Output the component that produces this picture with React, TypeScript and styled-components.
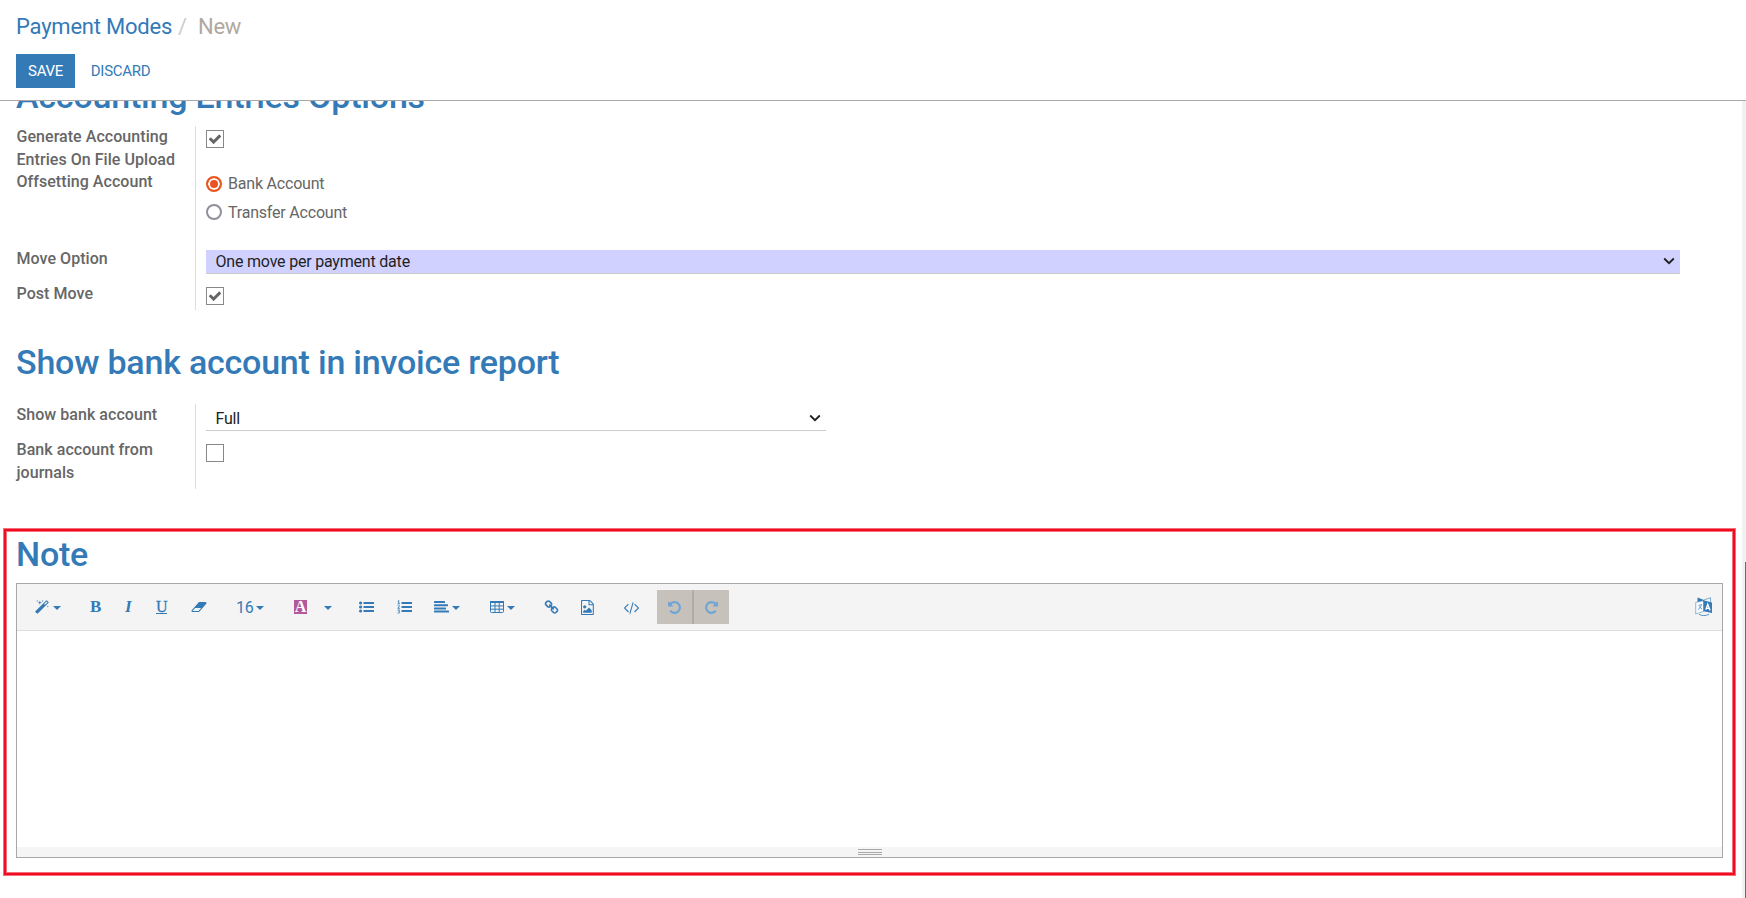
import React from "react";
import styled, { createGlobalStyle } from "styled-components";

const BLUE = "#337ab7";

const GlobalStyle = createGlobalStyle`
  * { box-sizing: border-box; }
  body { margin: 0; background: #fff; overflow: hidden; font-family: Roboto, "Noto Sans", sans-serif; }
`;

const Page = styled.div`
  width: 100%;
  height: 898px;
  display: flex;
  flex-direction: column;
  overflow: hidden;
  font-size: 16px;
  line-height: 23px;
  letter-spacing: -0.2px;
  color: #666;
`;
const ControlPanel = styled.header`
  flex: none;
  height: 101px;
  border-bottom: 1px solid #a8a8a8;
  padding: 12px 16px 0;
`;
const Breadcrumb = styled.nav`
  display: flex;
  height: 30px;
  line-height: 30px;
  font-size: 22px;
  color: ${BLUE};
  letter-spacing: -0.22px;
`;
const Slash = styled.span`
  color: #ccc;
  padding: 0 11px 0 6px;
`;
const Current = styled.span`
  color: #b1a8a0;
`;
const Buttons = styled.div`
  display: flex;
  margin-top: 12px;
`;
const Button = styled.button<{ $primary?: boolean }>`
  height: 34px;
  width: ${(p) => (p.$primary ? 59 : 91)}px;
  padding: 0;
  border: 0;
  font: 15px Roboto, sans-serif;
  letter-spacing: -0.3px;
  text-transform: uppercase;
  background: ${(p) => (p.$primary ? BLUE : "transparent")};
  color: ${(p) => (p.$primary ? "#fff" : BLUE)};
`;
const Content = styled.div`
  flex: 1;
  min-height: 0;
  display: flex;
  background: #fff;
`;
const Sheet = styled.main`
  flex: 1;
  overflow: hidden;
`;
const ScrollTrack = styled.div`
  width: 4px;
  background: #f1f1f1;
  padding: 461px 0 0 3px;
`;
const ScrollThumb = styled.div`
  height: 100%;
  background: #686868;
`;
const Title = styled.h1<{ $top?: number }>`
  margin: ${(p) => p.$top ?? 0}px 0 0 16px;
  height: 40px;
  line-height: 40px;
  font-size: 34px;
  font-weight: 500;
  letter-spacing: -0.21px;
  color: ${BLUE};
  white-space: nowrap;
`;
const Group = styled.section<{ $top: number }>`
  margin: ${(p) => p.$top}px 0 0 16px;
  width: 1664px;
`;
const Row = styled.div<{ $h: number }>`
  display: flex;
  height: ${(p) => p.$h}px;
`;
const Label = styled.label`
  width: 180px;
  flex: none;
  border-right: 1px solid #ddd;
  font-weight: 500;
  color: #666;
  letter-spacing: 0.05px;
  white-space: pre-line;
  span {
    display: block;
    margin: -1px 0 0 0.5px;
  }
`;
const Field = styled.div<{ $top?: number }>`
  flex: 1;
  padding: ${(p) => p.$top ?? 0}px 0 0 10px;
`;
const Box = styled.span`
  display: flex;
  align-items: center;
  justify-content: center;
  width: 18px;
  height: 18px;
  border: 1px solid #888;
  color: #666;
`;
const RadioRow = styled.div`
  display: flex;
  align-items: center;
  gap: 6px;
  height: 24px;
  margin-bottom: 4px;
`;
const RadioText = styled.span<{ $raise?: boolean }>`
  padding-bottom: ${(p) => (p.$raise ? 2 : 0)}px;
`;
const Radio = styled.span<{ $on?: boolean }>`
  width: 16px;
  height: 16px;
  border-radius: 50%;
  border: 2px solid ${(p) => (p.$on ? "#e95420" : "#8f8f9d")};
  background: ${(p) => (p.$on ? "#e95420" : "#fff")};
  box-shadow: inset 0 0 0 2px #fff;
`;
const Select = styled.div<{ $w: number; $h: number; $required?: boolean }>`
  display: flex;
  justify-content: space-between;
  align-items: center;
  width: ${(p) => p.$w}px;
  height: ${(p) => p.$h}px;
  padding: 0 5px 1px 9.5px;
  border-bottom: 1px solid #ccc;
  background: ${(p) => (p.$required ? "#d1d1ff" : "#fff")};
  color: #1f1f1f;
`;
const Callout = styled.section`
  margin: 39px 0 0 3px;
  width: 1733px;
  height: 348px;
  border: 1px solid #f6707b;
  box-shadow: inset 0 0 0 2px #f00c20, inset 0 0 0 3px #f6707b;
  padding: 5px 12px 0;
`;
const NoteTitle = styled(Title)`
  margin-left: 0;
`;
const Editor = styled.div`
  margin-top: 9px;
  height: 275px;
  width: 1707px;
  border: 1px solid #a8a8a8;
  display: flex;
  flex-direction: column;
`;
const Toolbar = styled.div`
  flex: none;
  height: 47px;
  background: #f4f4f4;
  border-bottom: 1px solid #ddd;
  display: flex;
  align-items: center;
  color: ${BLUE};
`;
const Tool = styled.span<{ $ml: number; $w: number }>`
  margin-left: ${(p) => p.$ml}px;
  width: ${(p) => p.$w}px;
  flex: none;
  display: flex;
  align-items: center;
  justify-content: space-between;
  svg { flex: none; }
`;
const Letter = styled.span<{ $italic?: boolean; $under?: boolean }>`
  font: ${(p) => (p.$italic ? "italic" : "normal")} bold 17px/14px "Liberation Serif", serif;
  ${(p) => p.$under && `font-size: 16px; line-height: 12px; font-weight: 400; -webkit-text-stroke: 0.3px ${BLUE}; border-bottom: 1px solid ${BLUE};`}
`;
const ColorChip = styled.span`
  width: 13px;
  height: 14px;
  background: #b3589b;
  color: #fff;
  font: bold 16px/14px "Liberation Serif", serif;
  text-align: center;
`;
const Caret = styled.span`
  border: 4px solid transparent;
  border-top-color: ${BLUE};
  border-bottom: 0;
  margin-top: 2px;
`;
const History = styled.span`
  margin-left: 18px;
  display: flex;
  gap: 2px;
  background: #b1aca4;
`;
const HistoryButton = styled.span`
  width: 35px;
  height: 34px;
  display: flex;
  align-items: center;
  justify-content: center;
  background: #c6c2bb;
  color: #6fa5d4;
`;
const Spacer = styled.span`
  flex: 1;
`;
const TranslateButton = styled.span`
  width: 27px;
  height: 20px;
`;
const Editable = styled.div`
  flex: 1;
  background: #fff;
`;
const StatusBar = styled.div`
  height: 10px;
  background: #f5f5f5;
  display: flex;
  flex-direction: column;
  align-items: center;
  padding-top: 2px;
  gap: 1px;
`;
const Grip = styled.i`
  width: 24px;
  height: 1px;
  margin-bottom: 1px;
  background: #a9a9a9;
  &:nth-child(2) { margin-bottom: 0; }
`;

const UNDO =
  "M1664 896q0 156-61 298t-164 245-245 164-298 61q-172 0-327-72.5t-264-204.5q-7-10-6.5-22.5t8.5-20.5l137-138q10-9 25-9 16 2 23 12 73 95 179 147t225 52q104 0 198.5-40.5t163.5-109.5 109.5-163.5 40.5-198.5-40.5-198.5-109.5-163.5-163.5-109.5-198.5-40.5q-98 0-188 35.5t-160 101.5l137 138q31 30 14 69-17 40-59 40h-448q-26 0-45-19t-19-45v-448q0-42 40-59 39-17 69 14l130 129q107-101 244.5-156.5t284.5-55.5q156 0 298 61t245 164 164 245 61 298z";
const CHECK =
  "M1671 566q0 40-28 68l-724 724-136 136q-28 28-68 28t-68-28l-136-136-362-362q-28-28-28-68t28-68l136-136q28-28 68-28t68 28l294 295 656-657q28-28 68-28t68 28l136 136q28 28 28 68z";
const MAGIC =
  "M1190 581l293-293-107-107-293 293zm447-293q0 27-18 45l-1286 1286q-18 18-45 18t-45-18l-198-198q-18-18-18-45t18-45l1286-1286q18-18 45-18t45 18l198 198q18 18 18 45zm-1351-190l98 30-98 30-30 98-30-98-98-30 98-30 30-98zm350 162l196 60-196 60-60 196-60-196-196-60 196-60 60-196zm930 478l98 30-98 30-30 98-30-98-98-30 98-30 30-98zm-640-640l98 30-98 30-30 98-30-98-98-30 98-30 30-98z";
const ERASER =
  "M960 1408l336-384h-768l-336 384h768zm1013-1077q15 34 9.5 71.5t-30.5 65.5l-896 1024q-38 44-96 44h-768q-38 0-69.5-20.5t-47.5-54.5q-15-34-9.5-71.5t30.5-65.5l896-1024q38-44 96-44h768q38 0 69.5 20.5t47.5 54.5z";
const LINK =
  "M1520 1216q0-40-28-68l-208-208q-28-28-68-28-42 0-72 32 3 3 19 18.5t21.5 21.5 15 19 13 25.5 3.5 27.5q0 40-28 68t-68 28q-15 0-27.5-3.5t-25.5-13-19-15-21.5-21.5-18.5-19q-33 31-33 73 0 40 28 68l206 207q27 27 68 27 40 0 68-26l147-146q28-28 28-67zm-703-705q0-40-28-68l-206-207q-28-28-68-28-39 0-68 27l-147 146q-28 28-28 67 0 40 28 68l208 208q27 27 68 27 42 0 72-31-3-3-19-18.5t-21.5-21.5-15-19-13-25.5-3.5-27.5q0-40 28-68t68-28q15 0 27.5 3.5t25.5 13 19 15 21.5 21.5 18.5 19q33-31 33-73zm895 705q0 120-85 203l-147 146q-83 83-203 83-121 0-204-85l-206-207q-83-83-83-203 0-123 88-209l-88-88q-86 88-208 88-120 0-204-84l-208-208q-84-84-84-204t85-203l147-146q83-83 203-83 121 0 204 85l206 207q83 83 83 203 0 123-88 209l88 88q86-88 208-88 120 0 204 84l208 208q84 84 84 204z";
const IMAGE =
  "M1468 380q28 28 48 76t20 88v1152q0 40-28 68t-68 28h-1344q-40 0-68-28t-28-68v-1600q0-40 28-68t68-28h896q40 0 88 20t76 48zm-444-244v376h376q-10-29-22-41l-313-313q-12-12-41-22zm384 1528v-1024h-416q-40 0-68-28t-28-68v-416h-768v1536h1280zm-128-448v320h-1024v-192l192-192 128 128 384-384zm-832-192q-80 0-136-56t-56-136 56-136 136-56 136 56 56 136-56 136-136 56z";
const CODE =
  "M553 1399l-50 50q-10 10-23 10t-23-10l-466-466q-10-10-10-23t10-23l466-466q10-10 23-10t23 10l50 50q10 10 10 23t-10 23l-393 393 393 393q10 10 10 23t-10 23zm591-1067l-373 1291q-4 13-15.5 19.5t-23.5 2.5l-62-17q-13-4-19.5-15.5t-2.5-24.5l373-1291q4-13 15.5-19.5t23.5-2.5l62 17q13 4 19.5 15.5t2.5 24.5zm657 651l-466 466q-10 10-23 10t-23-10l-50-50q-10-10-10-23t10-23l393-393-393-393q-10-10-10-23t10-23l50-50q10-10 23-10t23 10l466 466q10 10 10 23t-10 23z";

function Glyph({ d, vw = 1792, size = 15, flip }: { d: string; vw?: number; size?: number; flip?: boolean }) {
  return (
    <svg width={(size * vw) / 1792} height={size} viewBox={`0 0 ${vw} 1792`} fill="currentColor">
      <path d={d} transform={flip ? `translate(${vw} 0) scale(-1 1)` : undefined} />
    </svg>
  );
}

function Bars({ kind }: { kind: "ul" | "ol" | "left" }) {
  if (kind === "left")
    return (
      <svg width="15" height="12" viewBox="0 0 15 12" fill="currentColor">
        <rect width="11" height="2" rx=".5" />
        <rect y="3.2" width="14" height="2" rx=".5" />
        <rect y="6.4" width="12" height="2" rx=".5" />
        <rect y="9.6" width="15" height="2" rx=".5" />
      </svg>
    );
  return (
    <svg width="15" height="14" viewBox="0 0 15 14" fill="currentColor">
      {[2, 6, 10].map((y) => (
        <g key={y}>
          <rect x="4.5" y={y} width="10.5" height="2" rx=".3" />
          {kind === "ul" && <circle cx="1.6" cy={y + 1} r="1.6" />}
        </g>
      ))}
      {kind === "ol" && (
        <path fill="none" stroke="currentColor" strokeWidth=".9" d="M.8 1.2 1.8.6v3.1M.6 3.7h2.3M.7 5.7c1-1 2.4 0 1.4 1.1L.8 8.3h2.1M.7 10h1.9l-1 1.2c1.6 0 1.6 2-.1 2-.4 0-.7-.1-1-.4" />
      )}
    </svg>
  );
}

function TableGlyph() {
  return (
    <svg width="14" height="12" viewBox="0 0 14 12" fill="none" stroke="currentColor">
      <rect x=".5" y=".5" width="13" height="11" rx="1" />
      <path d="M0 1h14" strokeWidth="2" />
      <path d="M0 4.9h14M0 8.2h14M5 1v11M9.2 1v11" />
    </svg>
  );
}

function Translate() {
  return (
    <svg width="18" height="20" viewBox="0 0 18 20">
      <path d="M2.5 .5 9 3v2L2.5 6z" fill={BLUE} />
      <path d="M9 3 15.5.7V5" fill="none" stroke={BLUE} strokeWidth=".6" />
      <path d="M.7 5.5 8.5 3.5v11L.7 17z" fill="#f8fafc" stroke={BLUE} strokeWidth=".5" />
      <path d="M8.5 3.2 17 5.5V16l-8.5-1.8z" fill={BLUE} />
      <path d="M3 12.5c2-1 3-3 3.5-5L3.5 8.5M4 9.5l3 2.5" fill="none" stroke={BLUE} strokeWidth=".7" />
      <path d="M10.8 12.8l1.9-5.6 2.5 6.3M11.6 11l3 .6" fill="none" stroke="#fff" strokeWidth="1.3" />
      <path d="M4 17.3c2.5 1.7 7 1.7 10 0" fill="none" stroke={BLUE} strokeWidth=".8" />
    </svg>
  );
}

function Chevron() {
  return (
    <svg width="12" height="8" viewBox="0 0 12 8" fill="none" stroke="#1f1f1f" strokeWidth="1.8">
      <path d="M1.2 1.5 6 6.2l4.8-4.7" />
    </svg>
  );
}

function CheckBox({ on }: { on?: boolean }) {
  return <Box>{on && <Glyph d={CHECK} size={14} />}</Box>;
}

export default function App() {
  return (
    <Page>
      <GlobalStyle />
      <ControlPanel>
        <Breadcrumb>
          Payment Modes<Slash>/</Slash><Current>New</Current>
        </Breadcrumb>
        <Buttons>
          <Button $primary>Save</Button>
          <Button>Discard</Button>
        </Buttons>
      </ControlPanel>
      <Content>
        <Sheet>
          <Title $top={-25}>Accounting Entries Options</Title>
          <Group $top={10}>
            <Row $h={45}>
              <Label><span>{"Generate Accounting\nEntries On File Upload"}</span></Label>
              <Field $top={4}><CheckBox on /></Field>
            </Row>
            <Row $h={77}>
              <Label><span>Offsetting Account</span></Label>
              <Field $top={1}>
                <RadioRow><Radio $on /><RadioText $raise>Bank Account</RadioText></RadioRow>
                <RadioRow><Radio /><RadioText>Transfer Account</RadioText></RadioRow>
              </Field>
            </Row>
            <Row $h={35}>
              <Label><span>Move Option</span></Label>
              <Field $top={2}>
                <Select $w={1474} $h={24} $required>One move per payment date<Chevron /></Select>
              </Field>
            </Row>
            <Row $h={27}>
              <Label><span>Post Move</span></Label>
              <Field $top={4}><CheckBox on /></Field>
            </Row>
          </Group>
          <Title $top={32}>Show bank account in invoice report</Title>
          <Group $top={22}>
            <Row $h={35}>
              <Label><span>Show bank account</span></Label>
              <Field $top={3}>
                <Select $w={620} $h={24}>Full<Chevron /></Select>
              </Field>
            </Row>
            <Row $h={50}>
              <Label><span>{"Bank account from\njournals"}</span></Label>
              <Field $top={5}><CheckBox /></Field>
            </Row>
          </Group>
          <Callout>
            <NoteTitle>Note</NoteTitle>
            <Editor>
              <Toolbar>
                <Tool $ml={18} $w={26}><Glyph d={MAGIC} /><Caret /></Tool>
                <Tool $ml={29} $w={12}><Letter>B</Letter></Tool>
                <Tool $ml={23} $w={8}><Letter $italic>I</Letter></Tool>
                <Tool $ml={23} $w={12}><Letter $under>U</Letter></Tool>
                <Tool $ml={23} $w={16}><Glyph d={ERASER} vw={2048} size={14} /></Tool>
                <Tool $ml={29} $w={28}>16<Caret /></Tool>
                <Tool $ml={30} $w={38}><ColorChip>A</ColorChip><Caret /></Tool>
                <Tool $ml={27} $w={15}><Bars kind="ul" /></Tool>
                <Tool $ml={23} $w={15}><Bars kind="ol" /></Tool>
                <Tool $ml={22} $w={26}><Bars kind="left" /><Caret /></Tool>
                <Tool $ml={30} $w={25}><TableGlyph /><Caret /></Tool>
                <Tool $ml={29} $w={15}><Glyph d={LINK} /></Tool>
                <Tool $ml={22} $w={13}><Glyph d={IMAGE} vw={1536} /></Tool>
                <Tool $ml={30} $w={15}><Glyph d={CODE} /></Tool>
                <History>
                  <HistoryButton><Glyph d={UNDO} /></HistoryButton>
                  <HistoryButton><Glyph d={UNDO} flip /></HistoryButton>
                </History>
                <Spacer />
                <TranslateButton><Translate /></TranslateButton>
              </Toolbar>
              <Editable />
              <StatusBar><Grip /><Grip /><Grip /></StatusBar>
            </Editor>
          </Callout>
        </Sheet>
        <ScrollTrack><ScrollThumb /></ScrollTrack>
      </Content>
    </Page>
  );
}
